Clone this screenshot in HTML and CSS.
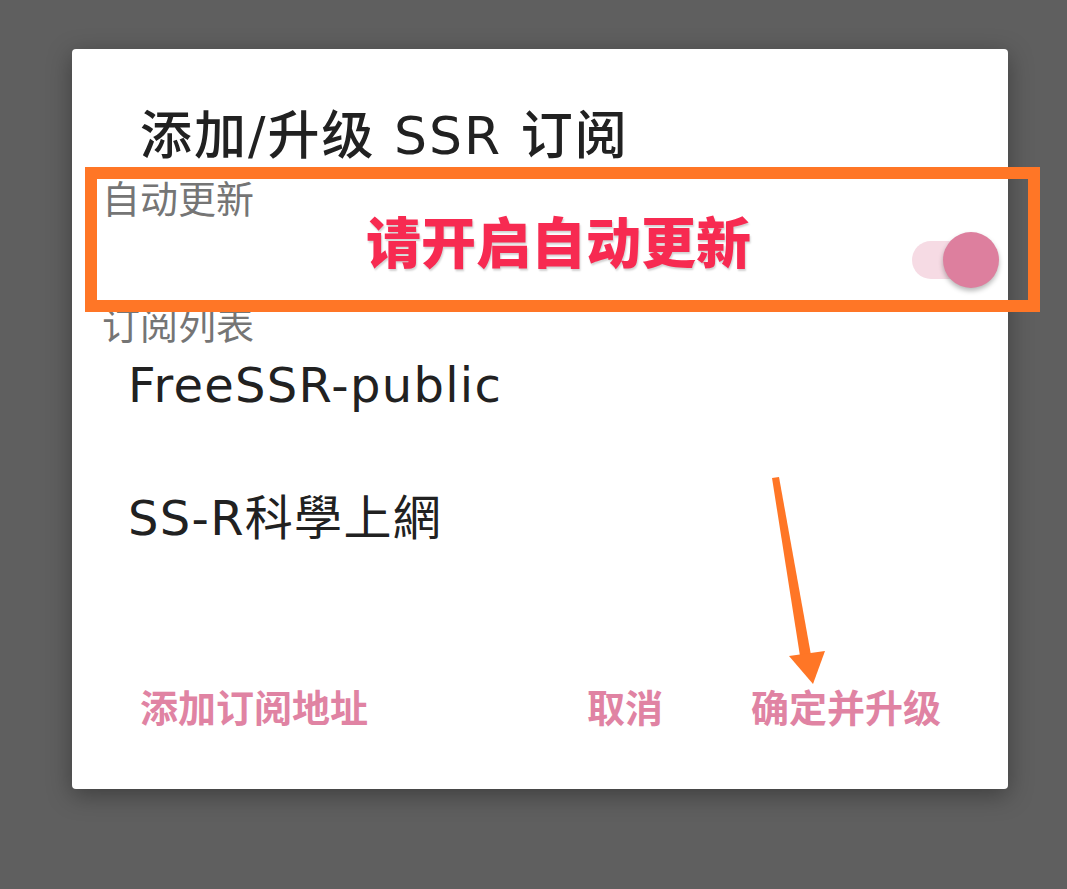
FILE: index.html
```html
<!DOCTYPE html>
<html lang="zh-CN">
<head>
<meta charset="utf-8">
<title>添加/升级 SSR 订阅</title>
<link rel="stylesheet" href="styles.css">
</head>
<body>
<div class="stage">
  <div class="dialog">
    <h1 class="title">添加/升级 SSR 订阅</h1>
    <div class="category">自动更新</div>
    <div class="switch-row">
      <div class="switch">
        <span class="track"></span>
        <span class="thumb"></span>
      </div>
    </div>
    <div class="category category-list">订阅列表</div>
    <ul class="subs">
      <li class="sub">FreeSSR-public</li>
      <li class="sub">SS-R科學上網</li>
    </ul>
    <div class="actions">
      <span class="btn">添加订阅地址</span>
      <span class="btn btn-cancel">取消</span>
      <span class="btn btn-ok">确定并升级</span>
    </div>
  </div>

  <div class="highlight"></div>
  <div class="callout">请开启自动更新</div>
  <svg class="arrow" width="1067" height="889" viewBox="0 0 1067 889">
    <polygon points="772,478 779,477 811,655 800,656" fill="#ff7626"/>
    <polygon points="789,656 825,651 813,684" fill="#ff7626"/>
  </svg>
</div>
</body>
</html>
```

FILE: styles.css
```css
* { box-sizing: border-box; }
html, body {
  margin: 0;
  padding: 0;
  background: #5f5f5f;
}
body {
  font-family: "DejaVu Sans", "Noto Sans CJK SC", sans-serif;
}
.stage {
  position: relative;
  width: 1067px;
  height: 889px;
  overflow: hidden;
  padding: 49px 0 0 72px;
}
.dialog {
  width: 936px;
  height: 740px;
  background: #ffffff;
  border-radius: 4px;
  box-shadow: 0 6px 24px rgba(0, 0, 0, 0.35);
  display: flex;
  flex-direction: column;
}
.title {
  margin: 0;
  padding: 53px 0 0 68px;
  height: 120px;
  font-family: "DejaVu Sans", "Noto Sans CJK SC", sans-serif;
  font-size: 52px;
  line-height: 68px;
  letter-spacing: 2px;
  font-weight: 500;
  color: #212121;
  white-space: nowrap;
}
.category {
  padding-left: 30px;
  font-family: "Noto Sans CJK SC", sans-serif;
  font-size: 38px;
  line-height: 46px;
  font-weight: 400;
  color: #757575;
}
.title + .category {
  margin-top: 5px;
}
.switch-row {
  display: flex;
  justify-content: flex-end;
  padding-right: 9px;
  height: 80px;
  align-items: center;
}
.switch {
  position: relative;
  width: 87px;
  height: 56px;
}
.track {
  position: absolute;
  left: 0;
  top: 9px;
  width: 80px;
  height: 38px;
  border-radius: 19px;
  background: #f6dbe4;
}
.thumb {
  position: absolute;
  right: 0;
  top: 0;
  width: 56px;
  height: 56px;
  border-radius: 50%;
  background: #dd7f9e;
  box-shadow: 0 3px 5px rgba(0, 0, 0, 0.28);
}
.subs {
  list-style: none;
  margin: 0;
  padding: 0 0 0 56px;
}
.sub {
  display: flex;
  align-items: center;
  font-size: 48px;
  line-height: 60px;
  letter-spacing: 1.3px;
  color: #212121;
}
.sub:first-child {
  height: 78px;
}
.sub:last-child {
  height: 158px;
  padding-top: 30px;
}
.actions {
  display: flex;
  align-items: center;
  height: 112px;
  margin-top: 68px;
  padding: 0 67px 0 68px;
}
.btn {
  font-family: "Noto Sans CJK SC", sans-serif;
  font-size: 38px;
  line-height: 50px;
  font-weight: 700;
  color: #e083a3;
}
.btn-cancel {
  margin-left: auto;
}
.btn-ok {
  margin-left: 88px;
}
.highlight {
  position: absolute;
  left: 85px;
  top: 167px;
  width: 955px;
  height: 145px;
  border: 12px solid #ff7626;
}
.callout {
  position: absolute;
  left: 366px;
  top: 201px;
  font-family: "Noto Sans CJK SC", sans-serif;
  font-size: 55px;
  line-height: 76px;
  font-weight: 900;
  color: #f72a51;
  text-shadow: 1px 2px 2px rgba(0, 0, 0, 0.18);
}
.arrow {
  position: absolute;
  left: 0;
  top: 0;
}
```
